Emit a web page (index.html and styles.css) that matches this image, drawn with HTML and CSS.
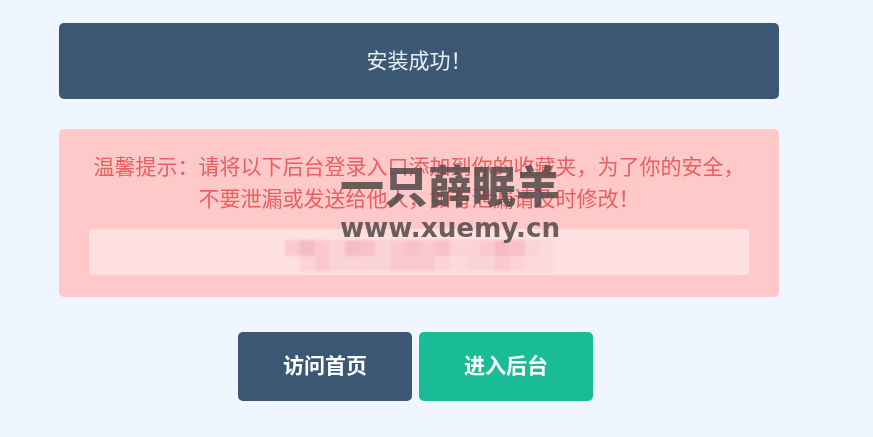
FILE: index.html
```html
<!DOCTYPE html>
<html lang="zh-CN">
<head>
  <meta charset="UTF-8">
  <meta name="viewport" content="width=device-width, initial-scale=1.0">
  <title>安装成功</title>
  <link rel="stylesheet" href="styles.css">
</head>
<body>
  <div class="wrap">
    <div class="title">安装成功！</div>

    <div class="alert">
      <p>温馨提示：请将以下后台登录入口添加到你的收藏夹，为了你的安全，<br>不要泄漏或发送给他人，如有泄漏请及时修改！</p>
      <div class="url">
        <div class="mosaic" aria-hidden="true">
          <i class="m2"></i><i class="m4"></i><i class="m2"></i><i class="m1"></i><i class="m4"></i><i class="m3"></i><i class="m1"></i><i class="m2"></i><i class="m3"></i><i class="m2"></i><i class="m3"></i><i class="m1"></i><i class="m1"></i><i class="m2"></i><i class="m4"></i><i class="m3"></i><i class="m1"></i><i class="m0"></i>
          <i></i><i class="m1"></i><i class="m2"></i><i class="m1"></i><i class="m1"></i><i class="m1"></i><i class="m1"></i><i class="m2"></i><i class="m2"></i><i class="m2"></i><i class="m1"></i><i class="m0"></i><i class="m1"></i><i class="m1"></i><i class="m2"></i><i class="m1"></i><i class="m0"></i><i class="m0"></i>
        </div>
      </div>
    </div>

    <div class="actions">
      <a class="btn btn-dark" href="#">访问首页</a>
      <a class="btn btn-green" href="#">进入后台</a>
    </div>
  </div>

  <div class="watermark">
    <div class="wm-name">一只薛眠羊</div>
    <div class="wm-url">www.xuemy.cn</div>
  </div>
</body>
</html>
```

FILE: styles.css
```css
body {
  margin: 0;
  background: #f0f6ff;
  font-family: "Liberation Sans", "Noto Sans CJK SC", sans-serif;
  overflow: hidden;
}
.wrap {
  width: 720px;
  margin-left: 59px;
  padding-top: 23px;
  filter: blur(.4px);
}
.title {
  height: 76px;
  line-height: 75px;
  background: #3c5773;
  border-radius: 5px;
  color: #e8edf2;
  font-size: 21px;
  text-align: center;
}
.alert {
  margin-top: 30px;
  padding: 22px 30px;
  background: #ffc9ca;
  border-radius: 5px;
  color: #ea6060;
  text-align: center;
}
.alert p {
  margin: 0;
  font-size: 21px;
  line-height: 32px;
  white-space: nowrap;
}
.url {
  height: 46px;
  margin-top: 14px;
  padding: 11px 0 0 196px;
  box-sizing: border-box;
  background: #fee0e1;
  border-radius: 4px;
}
.mosaic {
  display: grid;
  grid-template-columns: repeat(18, 15px);
  grid-auto-rows: 15.5px;
  filter: blur(.8px);
}
.m0 { background: #fcdadc; }
.m1 { background: #fbd3d6; }
.m2 { background: #fac9cd; }
.m3 { background: #f8c2c8; }
.m4 { background: #f6bcc4; }
.actions {
  display: flex;
  justify-content: center;
  margin-top: 35px;
}
.btn {
  width: 174px;
  height: 69px;
  margin-right: 7px;
  line-height: 67px;
  border-radius: 5px;
  color: #fff;
  font-size: 21px;
  font-weight: bold;
  text-align: center;
  text-decoration: none;
}
.btn-dark { background: #3c5773; }
.btn-green { background: #1abc96; }
.watermark {
  position: absolute;
  left: 339px;
  top: 162px;
  width: 222px;
  color: #574d4d;
  font-weight: 900;
  text-align: center;
  opacity: .88;
  filter: blur(.3px);
}
.wm-name {
  font-size: 44px;
  line-height: 52px;
  white-space: nowrap;
}
.wm-url {
  margin-top: -1px;
  font-family: "DejaVu Sans", sans-serif;
  font-size: 26.2px;
  line-height: 30px;
  white-space: nowrap;
}
```
